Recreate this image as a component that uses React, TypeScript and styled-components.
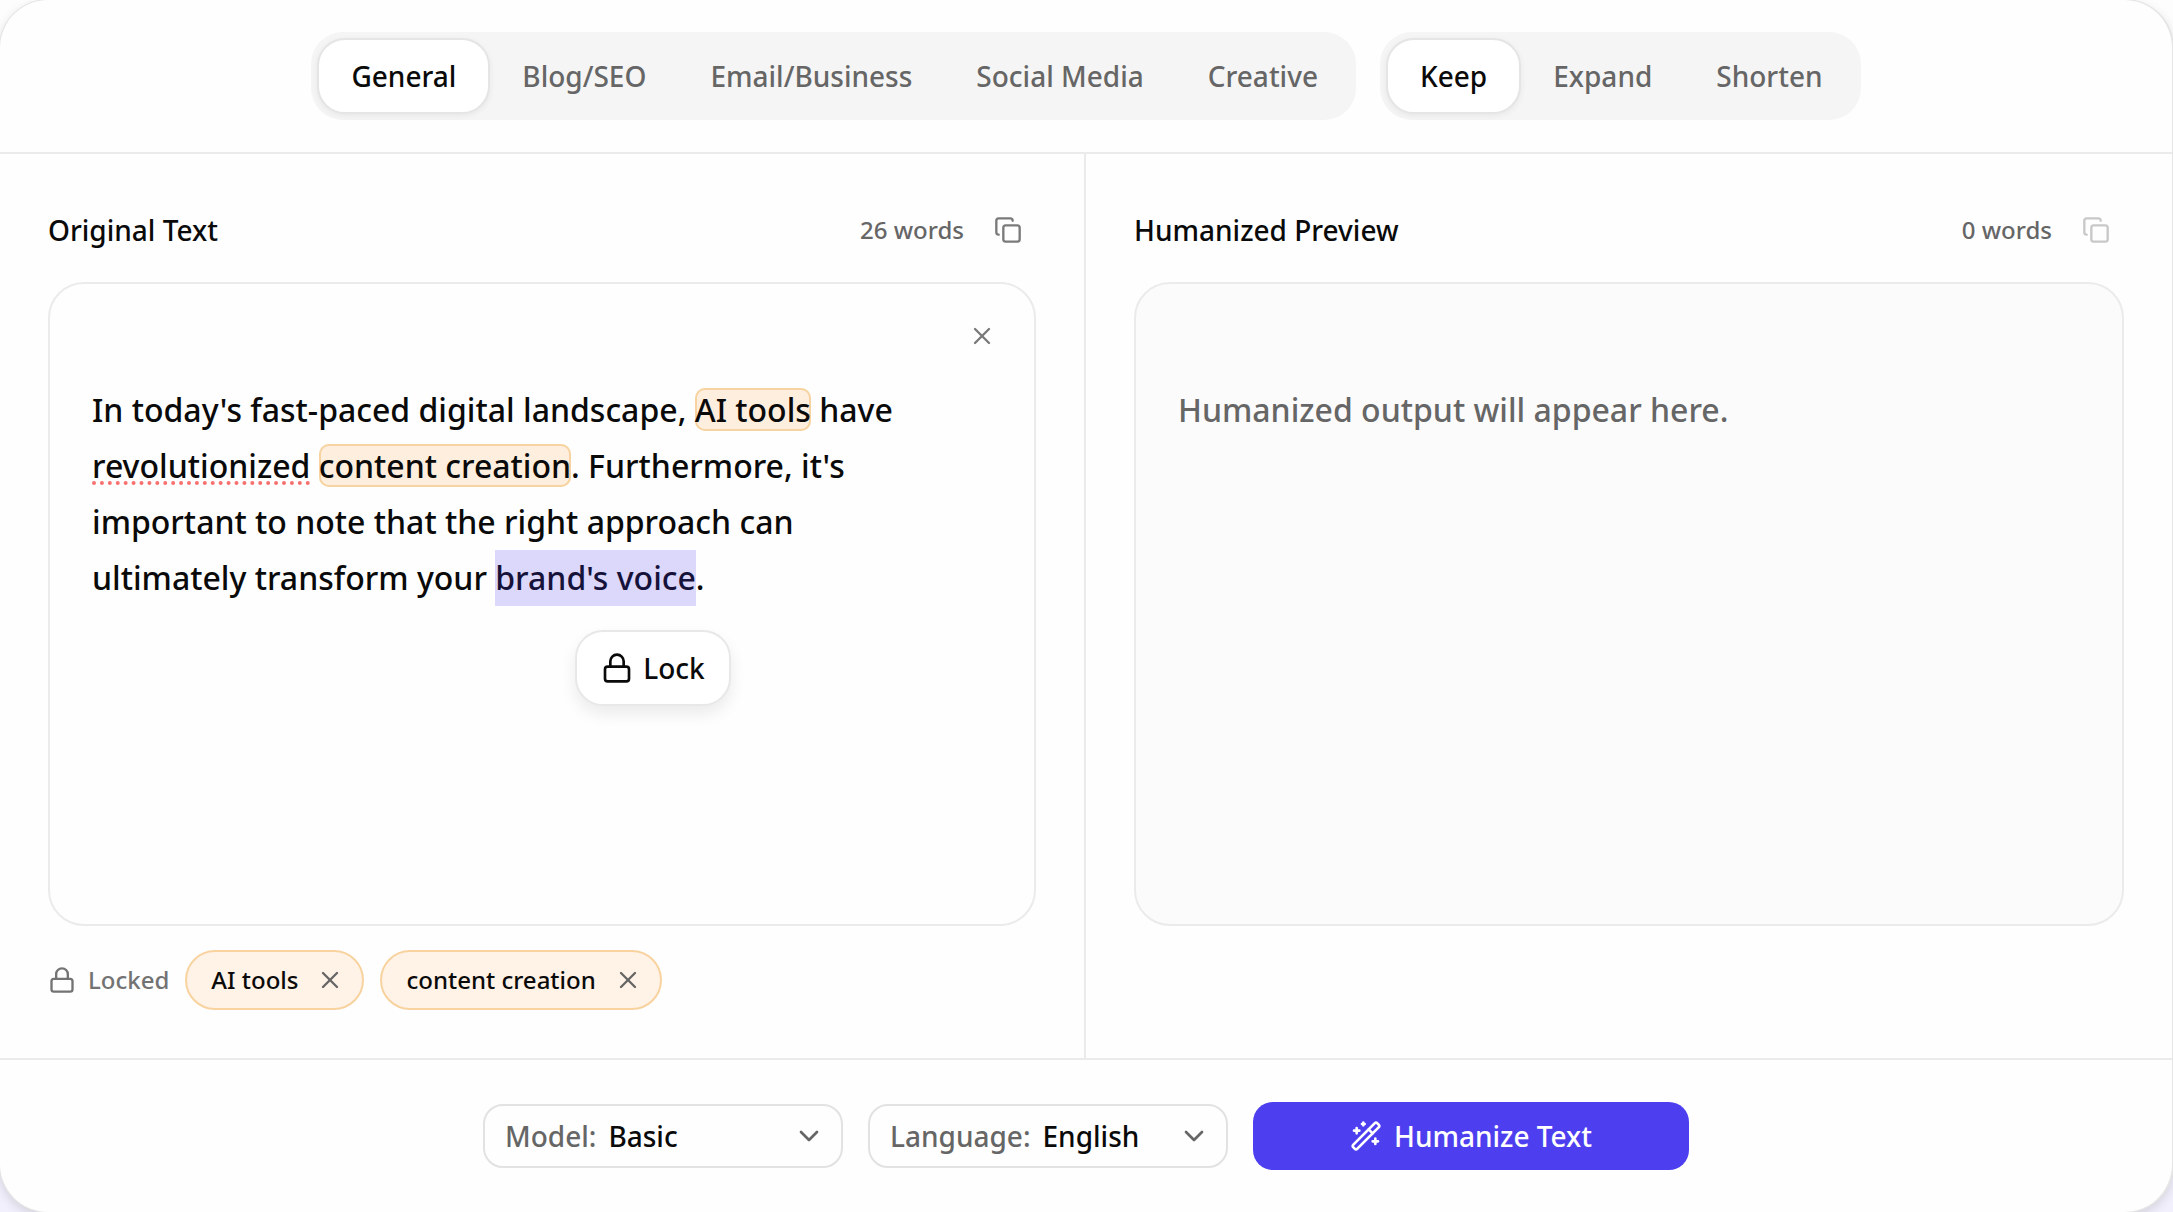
import React, { useState } from "react";
import styled, { createGlobalStyle } from "styled-components";
import { ChevronDown, Copy, Lock, X } from "lucide-react";

const GlobalStyle = createGlobalStyle`
  *, *::before, *::after { box-sizing: border-box; }
  html { background: linear-gradient(180deg, #fdfdfd 0%, #f1f0fc 100%); min-height: 100%; }
  body { margin: 0; overflow-x: hidden; }
  body, button, select, textarea {
    font-family: "Noto Sans", "Open Sans", sans-serif;
    font-weight: 500;
    color: #0a0a0a;
  }
  button { border: 0; background: none; padding: 0; cursor: pointer; }
  h2, p { margin: 0; }
`;

const Frame = styled.main`
  display: flex;
  flex-direction: column;
  min-height: 100vh;
  border-right: 1px solid #e5e5e5;
  border-radius: 48px;
  background: #fefefe;
  box-shadow: 0 0 0 1px #e5e5e5, 0 4px 12px rgba(0, 0, 0, 0.14);
`;

const Toolbar = styled.header`
  display: flex;
  justify-content: center;
  gap: 24px;
  padding: 32px;
  border-bottom: 2px solid #ebebeb;
`;

const TabGroup = styled.div`
  display: flex;
  padding: 6px;
  border-radius: 32px;
  background: #f5f5f5;
`;

const Tab = styled.button<{ $active: boolean }>`
  height: 76px;
  padding: 0 32px;
  border: ${(p) => (p.$active ? "2px solid #e5e5e5" : "0")};
  border-radius: 28px;
  background: ${(p) => (p.$active ? "#ffffff" : "transparent")};
  box-shadow: ${(p) => (p.$active ? "0 2px 6px rgba(0, 0, 0, 0.06)" : "none")};
  color: ${(p) => (p.$active ? "#0a0a0a" : "#666666")};
  font-size: 28px;
  line-height: 40px;
`;

const Panels = styled.div`
  display: grid;
  grid-template-columns: 1fr 1fr;
  flex: 1;
`;

const Panel = styled.section`
  display: flex;
  flex-direction: column;
  gap: 24px;
  min-width: 0;
  padding: 48px;

  &:first-child { border-right: 2px solid #ebebeb; }
`;

const PanelHead = styled.div`
  display: flex;
  align-items: center;
  justify-content: space-between;
  height: 56px;
`;

const PanelTitle = styled.h2`
  font-size: 28px;
  line-height: 40px;
  font-weight: 500;
`;

const PanelTools = styled.div`
  display: flex;
  align-items: center;
  gap: 16px;
  color: #666666;
  font-size: 24px;
  line-height: 32px;
`;

const IconButton = styled.button`
  display: grid;
  place-items: center;
  width: 56px;
  height: 56px;
  color: #7a7a7a;

  &:disabled { opacity: 0.4; cursor: default; }
`;

const Card = styled.div<{ $muted?: boolean }>`
  position: relative;
  height: 644px;
  padding: 98px 42px 40px;
  border: 2px solid #ebebeb;
  border-radius: 36px;
  background: ${(p) => (p.$muted ? "#fbfbfb" : "#fefefe")};
`;

const ClearButton = styled(IconButton)`
  position: absolute;
  top: 24px;
  right: 24px;
`;

const Editor = styled.div`
  max-width: 840px;
  font-size: 32px;
  line-height: 56px;
  outline: none;
`;

const Output = styled.textarea`
  display: block;
  width: 100%;
  height: 100%;
  padding: 0;
  border: 0;
  outline: none;
  resize: none;
  background: transparent;
  font-size: 32px;
  line-height: 56px;

  &::placeholder { color: #666666; opacity: 1; }
`;

const LockedPhrase = styled.mark`
  border-radius: 10px;
  background: #feeedd;
  box-shadow: inset 0 0 0 2px #f6d3a0;
  color: inherit;
`;

const Misspelled = styled.span`
  text-decoration: underline dotted #f87171 4px;
  text-decoration-skip-ink: none;
  text-underline-offset: 3px;
`;

const Selection = styled.span`
  position: relative;
  display: inline-block;
  height: 56px;
  vertical-align: top;
  background: #dbd8fb;
  color: #16123a;
`;

const LockPopup = styled.button`
  position: absolute;
  top: calc(100% + 24px);
  left: 80px;
  display: flex;
  align-items: center;
  gap: 10px;
  height: 76px;
  padding: 0 24px;
  border: 2px solid #e8e8e8;
  border-radius: 28px;
  background: #ffffff;
  box-shadow: 0 8px 16px rgba(0, 0, 0, 0.08);
  font-size: 28px;
  line-height: 40px;
`;

const LockedRow = styled.div`
  display: flex;
  align-items: center;
  gap: 16px;
  font-size: 24px;
  line-height: 32px;
`;

const LockedLabel = styled.span`
  display: flex;
  align-items: center;
  gap: 12px;
  color: #737373;
`;

const Chip = styled.span`
  display: flex;
  align-items: center;
  gap: 18px;
  height: 60px;
  padding: 0 18px 0 24px;
  border: 2px solid #f8d3a0;
  border-radius: 30px;
  background: #fff2e6;
`;

const ChipRemove = styled.button`
  display: flex;
  color: #666666;
`;

const Footer = styled.footer`
  display: flex;
  align-items: center;
  justify-content: center;
  gap: 25px;
  padding: 42px 32px;
  border-top: 2px solid #ebebeb;
`;

const Picker = styled.label`
  display: flex;
  align-items: center;
  gap: 12px;
  width: 360px;
  height: 64px;
  padding: 0 16px 0 20px;
  border: 2px solid #e2e2e2;
  border-radius: 20px;
  color: #666666;
  font-size: 28px;
  line-height: 40px;
`;

const PickerSelect = styled.select`
  flex: 1;
  min-width: 0;
  height: 100%;
  padding: 0;
  border: 0;
  outline: none;
  appearance: none;
  background: transparent;
  font-size: 28px;
`;

const PrimaryButton = styled.button`
  display: flex;
  align-items: center;
  justify-content: center;
  gap: 12px;
  width: 436px;
  height: 68px;
  border-radius: 20px;
  background: #4d3ff0;
  color: #ffffff;
  font-size: 28px;
  line-height: 40px;
`;

function WandIcon() {
  return (
    <svg width="32" height="32" viewBox="0 0 24 24" fill="none" stroke="currentColor" strokeWidth="2" strokeLinecap="round" strokeLinejoin="round" aria-hidden="true">
      <path d="m21.64 3.64-1.28-1.28a1.21 1.21 0 0 0-1.72 0L2.36 18.64a1.21 1.21 0 0 0 0 1.72l1.28 1.28a1.2 1.2 0 0 0 1.72 0L21.64 5.36a1.2 1.2 0 0 0 0-1.72" />
      <path d="m14 7 3 3M5 6v4M19 14v4M10 2v2M7 8H3M21 16h-4M11 3H9" />
    </svg>
  );
}

const styles = ["General", "Blog/SEO", "Email/Business", "Social Media", "Creative"];
const lengths = ["Keep", "Expand", "Shorten"];

function Tabs({ label, items }: { label: string; items: string[] }) {
  const [current, setCurrent] = useState(items[0]);
  return (
    <TabGroup role="group" aria-label={label}>
      {items.map((item) => (
        <Tab key={item} type="button" $active={item === current} aria-pressed={item === current} onClick={() => setCurrent(item)}>
          {item}
        </Tab>
      ))}
    </TabGroup>
  );
}

function Dropdown({ label, options }: { label: string; options: string[] }) {
  return (
    <Picker>
      {label}
      <PickerSelect defaultValue={options[0]}>
        {options.map((option) => (
          <option key={option}>{option}</option>
        ))}
      </PickerSelect>
      <ChevronDown size={32} strokeWidth={2} aria-hidden="true" />
    </Picker>
  );
}

export default function App() {
  const [locked, setLocked] = useState(["AI tools", "content creation"]);
  return (
    <>
      <GlobalStyle />
      <Frame>
        <Toolbar>
          <Tabs label="Style" items={styles} />
          <Tabs label="Length" items={lengths} />
        </Toolbar>
        <Panels>
          <Panel>
            <PanelHead>
              <PanelTitle>Original Text</PanelTitle>
              <PanelTools>
                26 words
                <IconButton type="button" aria-label="Copy original text">
                  <Copy size={28} strokeWidth={2} />
                </IconButton>
              </PanelTools>
            </PanelHead>
            <Card>
              <ClearButton type="button" aria-label="Clear text">
                <X size={28} strokeWidth={2} />
              </ClearButton>
              <Editor role="textbox" aria-multiline="true" aria-label="Original text" tabIndex={0}>
                In today's fast-paced digital landscape, <LockedPhrase>AI tools</LockedPhrase> have{" "}
                <Misspelled>revolutionized</Misspelled> <LockedPhrase>content creation</LockedPhrase>. Furthermore,
                it's important to note that the right approach can ultimately transform your{" "}
                <Selection>
                  brand's voice
                  <LockPopup type="button">
                    <Lock size={32} strokeWidth={2} />
                    Lock
                  </LockPopup>
                </Selection>
                .
              </Editor>
            </Card>
            <LockedRow>
              <LockedLabel>
                <Lock size={28} strokeWidth={2} />
                Locked
              </LockedLabel>
              {locked.map((phrase) => (
                <Chip key={phrase}>
                  {phrase}
                  <ChipRemove
                    type="button"
                    aria-label={`Unlock ${phrase}`}
                    onClick={() => setLocked(locked.filter((item) => item !== phrase))}
                  >
                    <X size={28} strokeWidth={2} />
                  </ChipRemove>
                </Chip>
              ))}
            </LockedRow>
          </Panel>
          <Panel>
            <PanelHead>
              <PanelTitle>Humanized Preview</PanelTitle>
              <PanelTools>
                0 words
                <IconButton type="button" aria-label="Copy humanized text" disabled>
                  <Copy size={28} strokeWidth={2} />
                </IconButton>
              </PanelTools>
            </PanelHead>
            <Card $muted>
              <Output readOnly aria-label="Humanized preview" placeholder="Humanized output will appear here." />
            </Card>
          </Panel>
        </Panels>
        <Footer>
          <Dropdown label="Model:" options={["Basic", "Advanced"]} />
          <Dropdown label="Language:" options={["English", "Spanish", "French"]} />
          <PrimaryButton type="button">
            <WandIcon />
            Humanize Text
          </PrimaryButton>
        </Footer>
      </Frame>
    </>
  );
}
